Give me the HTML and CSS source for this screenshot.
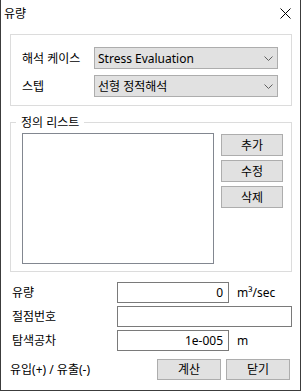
FILE: index.html
```html
<!DOCTYPE html>
<html lang="ko">
<head>
  <meta charset="UTF-8">
  <title>유량</title>
  <link rel="stylesheet" href="styles.css">
</head>
<body>
  <div class="dialog">
    <div class="titlebar">
      <span class="title">유량</span>
      <svg class="close" width="11" height="11" viewBox="0 0 11 11">
        <path d="M0.5 0.5 L10.5 10.5 M10.5 0.5 L0.5 10.5" stroke="#000" stroke-width="1" fill="none"/>
      </svg>
    </div>

    <div class="group setup">
      <div class="field">
        <span class="field-label">해석 케이스</span>
        <div class="combo">
          <span>Stress Evaluation</span>
          <svg class="chevron" width="9" height="5" viewBox="0 0 9 5"><polyline points="0.5,0.5 4.5,4.5 8.5,0.5" stroke="#606060" fill="none"/></svg>
        </div>
      </div>
      <div class="field">
        <span class="field-label">스텝</span>
        <div class="combo">
          <span>선형 정적해석</span>
          <svg class="chevron" width="9" height="5" viewBox="0 0 9 5"><polyline points="0.5,0.5 4.5,4.5 8.5,0.5" stroke="#606060" fill="none"/></svg>
        </div>
      </div>
    </div>

    <fieldset class="group defs">
      <legend>정의 리스트</legend>
      <div class="listbox"></div>
      <div class="side-buttons">
        <button class="btn">추가</button>
        <button class="btn">수정</button>
        <button class="btn">삭제</button>
      </div>
    </fieldset>

    <div class="params">
      <div class="param">
        <span class="param-label">유량</span>
        <div class="input short">0</div>
        <span class="unit">m³/sec</span>
      </div>
      <div class="param">
        <span class="param-label">절점번호</span>
        <div class="input wide"></div>
      </div>
      <div class="param">
        <span class="param-label">탐색공차</span>
        <div class="input short">1e-005</div>
        <span class="unit">m</span>
      </div>
    </div>

    <div class="footer">
      <span>유입(+) / 유출(-)</span>
      <div class="actions">
        <button class="btn wide-btn">계산</button>
        <button class="btn wide-btn">닫기</button>
      </div>
    </div>
  </div>
</body>
</html>
```

FILE: styles.css
```css
* {
  box-sizing: border-box;
}
body {
  margin: 0;
  font-family: "Noto Sans", "Noto Sans CJK KR", sans-serif;
  font-size: 12px;
  line-height: 15px;
  color: #000;
  background: #fff;
}
.dialog {
  width: 301px;
  height: 391px;
  border: 1px solid #3c3c3c;
  border-top: none;
  background: #fff;
}
.titlebar {
  height: 26px;
  display: flex;
  align-items: center;
  justify-content: space-between;
  padding: 0 9px 0 3px;
}
.title {
  font-size: 12px;
}
.close {
  display: block;
  margin-top: 1px;
}
.group {
  border: 1px solid #dcdcdc;
}
.setup {
  margin: 8px 8px 0 9px;
  height: 72px;
  padding: 12px 13px 8px 11px;
  display: flex;
  flex-direction: column;
  gap: 6px;
}
.field {
  display: flex;
  align-items: center;
}
.field-label {
  width: 72px;
}
.combo {
  width: 184px;
  height: 22px;
  border: 1px solid #adadad;
  background: #e1e1e1;
  display: flex;
  align-items: center;
  justify-content: space-between;
  padding: 0 4px 0 3px;
}
.chevron {
  display: block;
}
.defs {
  margin: 9px 8px 0 9px;
  padding: 3px 8px 7px 11px;
  display: flex;
  align-items: flex-start;
  min-width: 0;
}
.defs legend {
  height: 15px;
  line-height: 15px;
  padding: 0 5px;
  margin-left: -6px;
}
.listbox {
  width: 192px;
  height: 131px;
  border: 1px solid #828790;
  background: #fff;
}
.side-buttons {
  margin-left: 7px;
  margin-top: 1px;
  display: flex;
  flex-direction: column;
  gap: 4px;
}
.btn {
  width: 62px;
  height: 22px;
  background: #e1e1e1;
  border: 1px solid #adadad;
  font: inherit;
  color: #000;
  padding: 0;
}
.params {
  margin-top: 10px;
  padding-left: 11px;
  display: flex;
  flex-direction: column;
  gap: 3px;
}
.param {
  display: flex;
  align-items: center;
}
.param-label {
  width: 105px;
}
.input {
  height: 21px;
  border: 1px solid #7a7a7a;
  background: #fff;
  text-align: right;
  padding-right: 5px;
  line-height: 19px;
}
.input.short {
  width: 112px;
}
.input.wide {
  width: 175px;
}
.unit {
  margin-left: 8px;
}
.footer {
  margin-top: 8px;
  padding: 0 10px 0 9px;
  display: flex;
  align-items: center;
  justify-content: space-between;
}
.actions {
  display: flex;
  gap: 5px;
}
.wide-btn {
  width: 64px;
  height: 21px;
}
```
